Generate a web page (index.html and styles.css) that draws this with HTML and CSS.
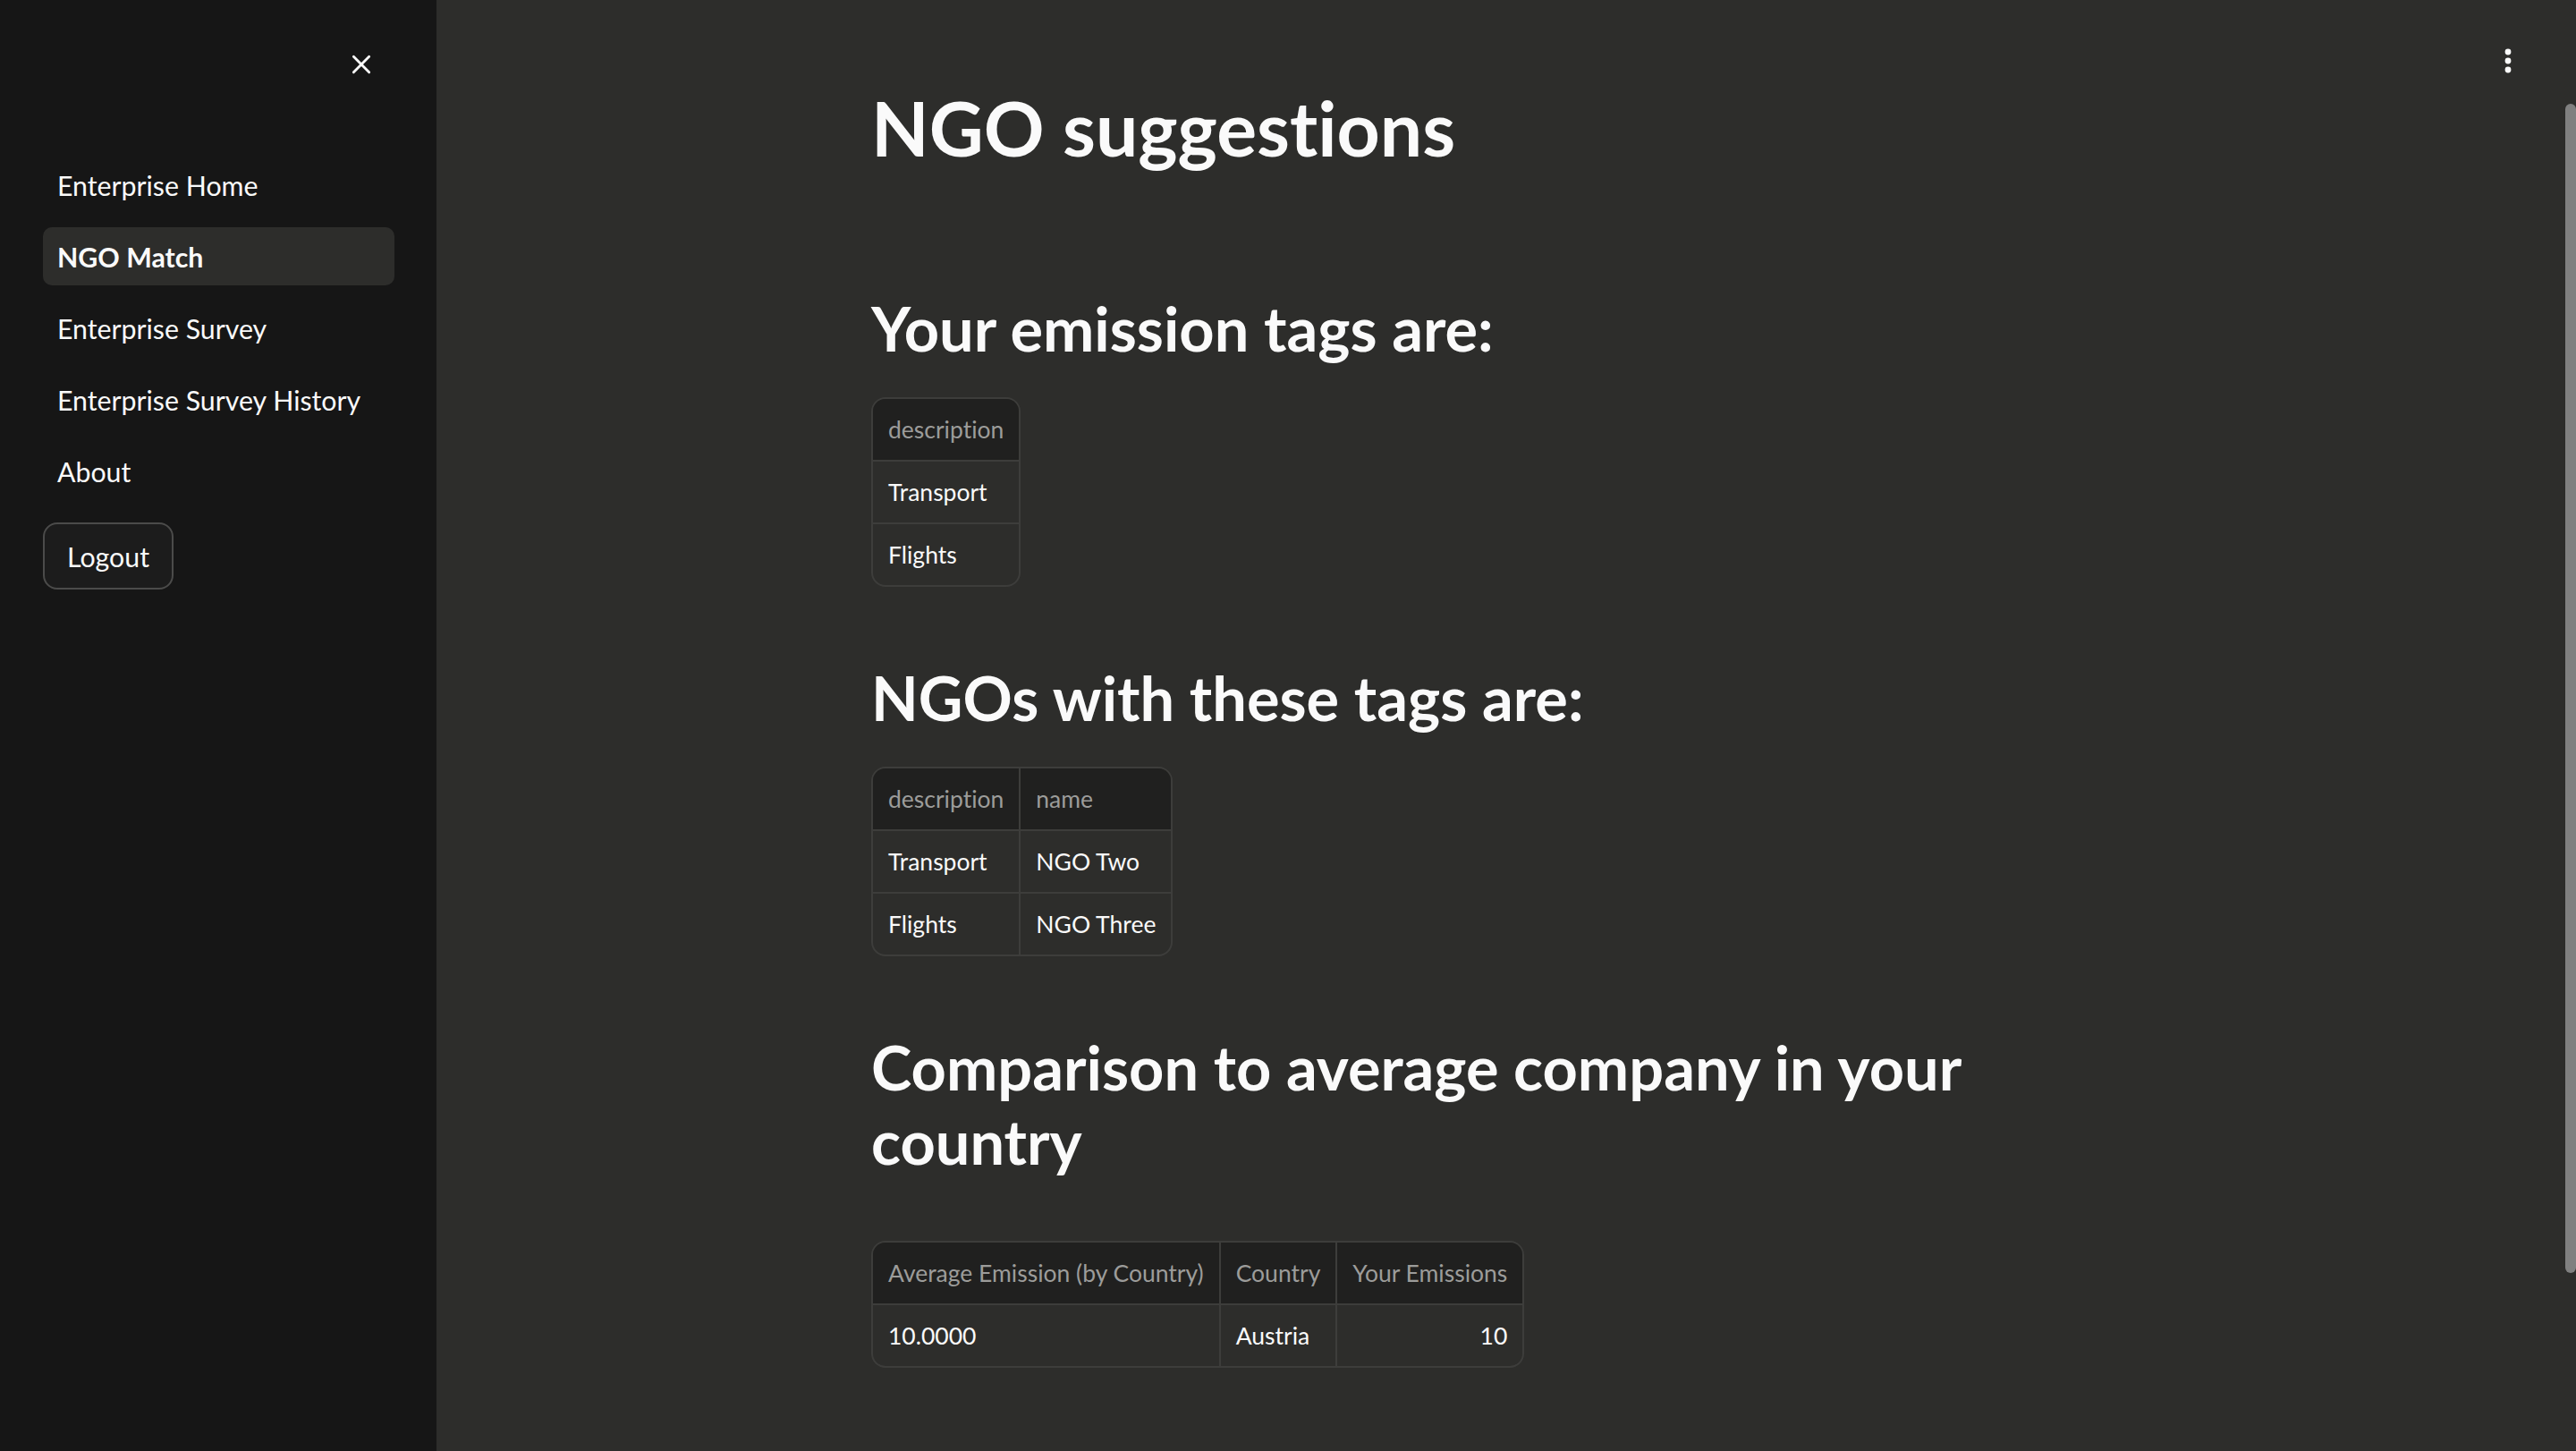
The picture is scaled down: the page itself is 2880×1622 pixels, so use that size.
FILE: index.html
```html
<!DOCTYPE html>
<html lang="en">
<head>
<meta charset="utf-8">
<title>NGO Match</title>
<link rel="stylesheet" href="styles.css">
</head>
<body>
<div class="app">
  <aside class="sidebar">
    <div class="sidebar-header">
      <button class="close-btn" aria-label="Close sidebar">
        <svg viewBox="0 0 24 24" width="26" height="26"><path d="M4 4 L20 20 M20 4 L4 20" stroke="#fafafa" stroke-width="2.6" stroke-linecap="round" fill="none"/></svg>
      </button>
    </div>
    <nav class="nav">
      <a class="nav-item">Enterprise Home</a>
      <a class="nav-item active">NGO Match</a>
      <a class="nav-item">Enterprise Survey</a>
      <a class="nav-item">Enterprise Survey History</a>
      <a class="nav-item">About</a>
    </nav>
    <button class="logout">Logout</button>
  </aside>
  <main class="main">
    <button class="menu-btn" aria-label="Main menu">
      <svg viewBox="0 0 8 28" width="8" height="28"><circle cx="4" cy="4" r="3.4" fill="#fafafa"/><circle cx="4" cy="14" r="3.4" fill="#fafafa"/><circle cx="4" cy="24" r="3.4" fill="#fafafa"/></svg>
    </button>
    <div class="scrollbar"></div>
    <div class="content">
      <h1 class="title">NGO suggestions</h1>

      <h2 class="section">Your emission tags are:</h2>
      <div class="table-wrap">
        <table>
          <thead><tr><th>description</th></tr></thead>
          <tbody>
            <tr><td>Transport</td></tr>
            <tr><td>Flights</td></tr>
          </tbody>
        </table>
      </div>

      <h2 class="section">NGOs with these tags are:</h2>
      <div class="table-wrap">
        <table>
          <thead><tr><th>description</th><th>name</th></tr></thead>
          <tbody>
            <tr><td>Transport</td><td>NGO Two</td></tr>
            <tr><td>Flights</td><td>NGO Three</td></tr>
          </tbody>
        </table>
      </div>

      <h2 class="section">Comparison to average company in your country</h2>
      <div class="table-wrap spaced">
        <table>
          <thead><tr><th>Average Emission (by Country)</th><th>Country</th><th>Your Emissions</th></tr></thead>
          <tbody>
            <tr><td>10.0000</td><td>Austria</td><td class="num">10</td></tr>
          </tbody>
        </table>
      </div>
    </div>
  </main>
</div>
</body>
</html>
```
FILE: styles.css
```css
html, body {
  margin: 0;
  padding: 0;
  height: 100%;
  overflow: hidden;
  background: #2d2d2b;
}

body {
  font-family: Lato, "Noto Sans", "Liberation Sans", sans-serif;
  font-variant-ligatures: none;
  color: #fafafa;
}

.app {
  display: flex;
  height: 1622px;
}

/* Sidebar */
.sidebar {
  width: 488px;
  flex: none;
  box-sizing: border-box;
  background: #161616;
  padding: 0 47px 0 48px;
  display: flex;
  flex-direction: column;
}

.sidebar-header {
  height: 144px;
  display: flex;
  align-items: center;
  justify-content: flex-end;
}

.close-btn {
  width: 26px;
  height: 26px;
  margin-right: 24px;
  padding: 0;
  border: none;
  background: transparent;
  display: flex;
}

.nav {
  display: flex;
  flex-direction: column;
  gap: 15px;
  padding-top: 30px;
}

.nav-item {
  height: 65px;
  display: flex;
  align-items: center;
  padding: 0 16px;
  border-radius: 10px;
  font-size: 30.3px;
  color: #fafafa;
}

.nav-item.active {
  background: #2d2d2b;
  font-weight: 700;
}

.logout {
  align-self: flex-start;
  margin-top: 25px;
  height: 75px;
  padding: 0 25px;
  border: 2px solid #4b4b4a;
  border-radius: 16px;
  background: #1c1c1c;
  color: #fafafa;
  font-family: inherit;
  font-size: 30.3px;
}

/* Main */
.main {
  flex: 1;
  position: relative;
  padding-right: 12px;
}

.menu-btn {
  position: absolute;
  top: 48px;
  right: 56px;
  width: 40px;
  height: 40px;
  padding: 0;
  border: none;
  background: transparent;
  display: flex;
  align-items: center;
  justify-content: center;
}

.scrollbar {
  position: absolute;
  top: 116px;
  right: 0;
  width: 12px;
  height: 1307px;
  border-radius: 6px;
  background: #808080;
}

.content {
  max-width: 1408px;
  margin: 0 auto;
  padding-top: 92px;
  display: flex;
  flex-direction: column;
  align-items: flex-start;
}

.title {
  margin: 0 0 49px;
  font-size: 84px;
  line-height: 102px;
  font-weight: 700;
}

.section {
  margin: 82px 0 0;
  font-size: 68.5px;
  line-height: 83px;
  font-weight: 700;
}

.table-wrap {
  margin-top: 36px;
  border: 2px solid #3d3d3b;
  border-radius: 16px;
  overflow: hidden;
}

.table-wrap.spaced {
  margin-top: 70px;
}

table {
  border-collapse: separate;
  border-spacing: 0;
  font-size: 26.5px;
}

th, td {
  padding: 12px 17px;
  line-height: 44px;
  text-align: left;
  white-space: nowrap;
  border-right: 2px solid #3d3d3b;
  border-bottom: 2px solid #3d3d3b;
}

th {
  font-weight: 400;
  color: #9c9c9a;
  background: #20201f;
}

td {
  color: #fafafa;
}

th:last-child, td:last-child {
  border-right: none;
}

tbody tr:last-child td {
  border-bottom: none;
}

td.num {
  text-align: right;
}
```
